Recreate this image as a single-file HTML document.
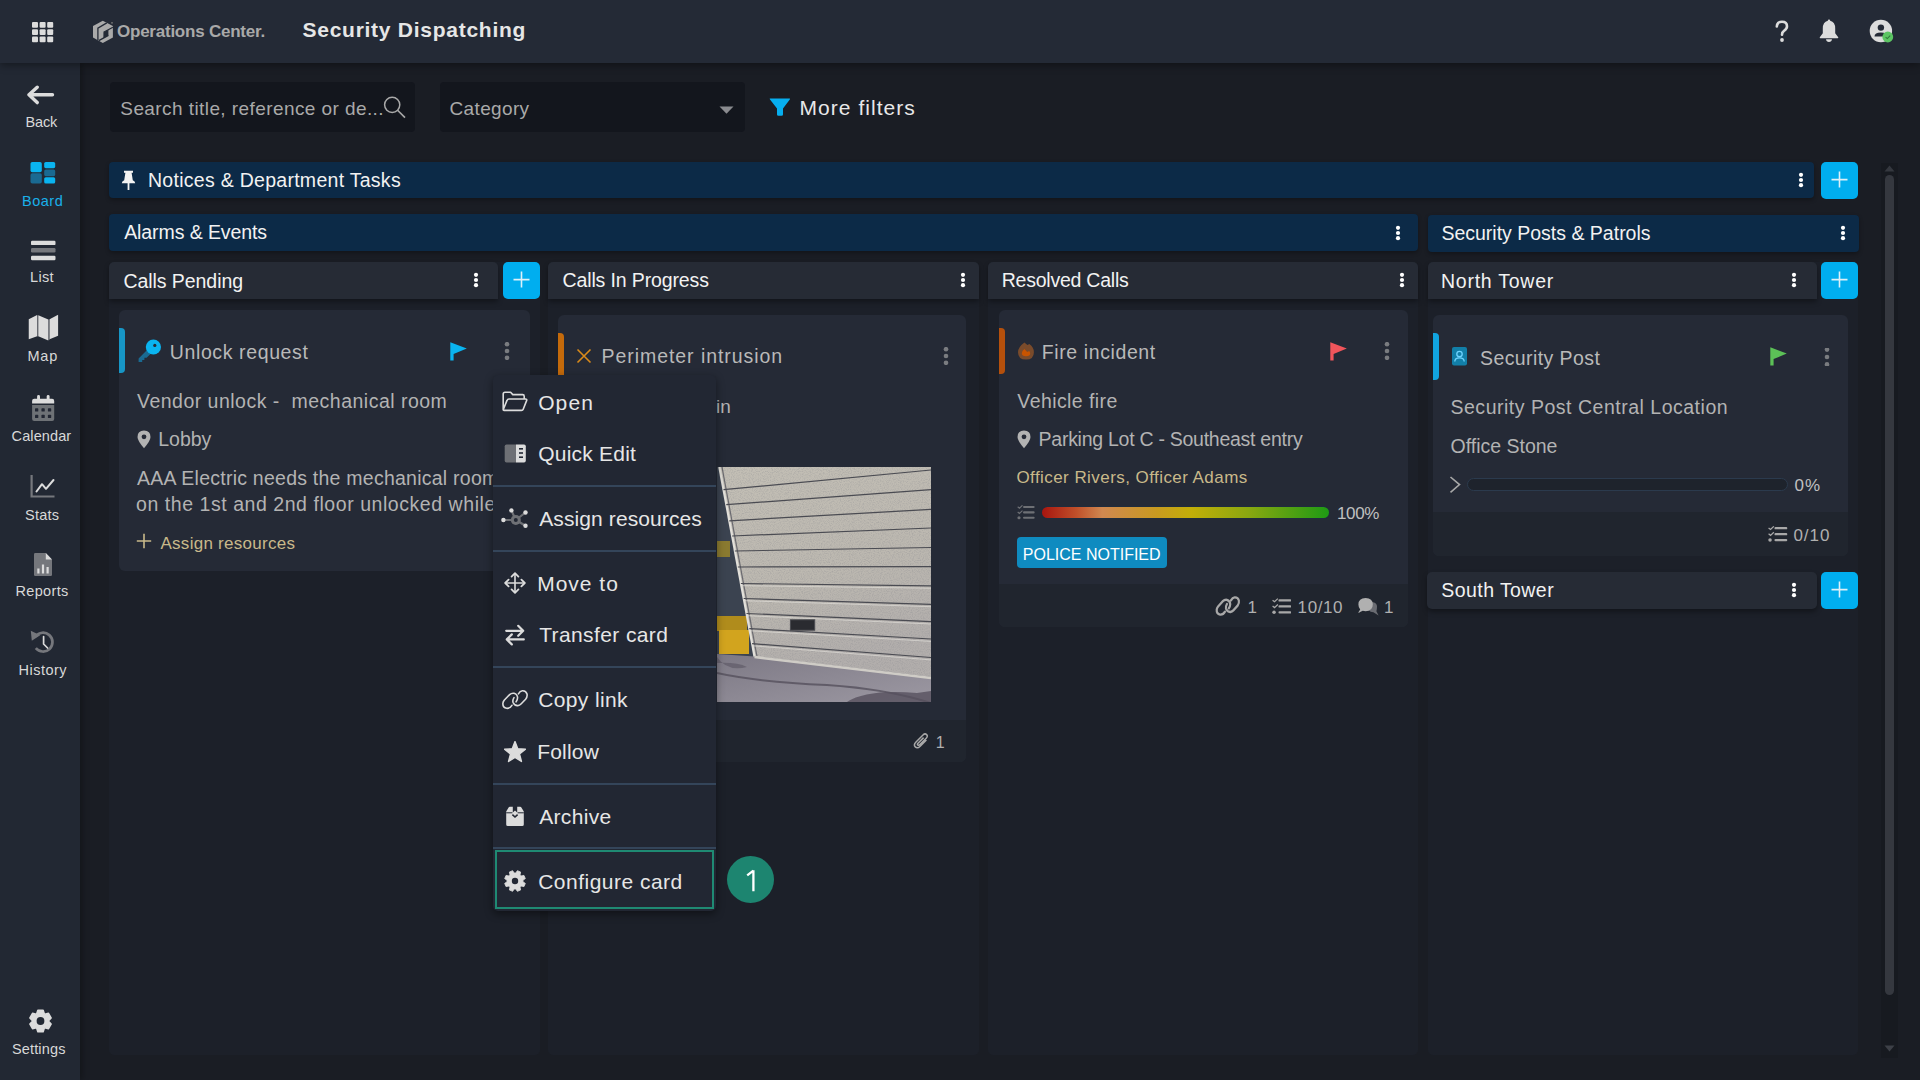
<!DOCTYPE html>
<html><head><meta charset="utf-8"><style>
html,body{margin:0;padding:0;width:1920px;height:1080px;overflow:hidden;background:#1a1d24;}
body{position:relative;font-family:"Liberation Sans",sans-serif;}
div,svg{position:absolute;box-sizing:border-box;}
.t{line-height:1;white-space:pre;}
</style></head><body>
<div style="left:0px;top:0px;width:1920px;height:63px;background:#242a36;border-radius:0px;box-shadow:0 2px 8px rgba(0,0,0,.4);z-index:2"></div>
<div style="left:0px;top:63px;width:80px;height:1017px;background:#222833;border-radius:0px;box-shadow:3px 0 6px rgba(0,0,0,.25);z-index:1"></div>
<div style="left:0;top:0;z-index:3"><svg style="position:absolute;left:32px;top:22px" width="22" height="21" viewBox="0 0 22 21"><rect x="0.0" y="0.0" width="6" height="5.8" rx="1" fill="#dcdcdc"/><rect x="0.0" y="7.2" width="6" height="5.8" rx="1" fill="#dcdcdc"/><rect x="0.0" y="14.4" width="6" height="5.8" rx="1" fill="#dcdcdc"/><rect x="7.6" y="0.0" width="6" height="5.8" rx="1" fill="#dcdcdc"/><rect x="7.6" y="7.2" width="6" height="5.8" rx="1" fill="#dcdcdc"/><rect x="7.6" y="14.4" width="6" height="5.8" rx="1" fill="#dcdcdc"/><rect x="15.2" y="0.0" width="6" height="5.8" rx="1" fill="#dcdcdc"/><rect x="15.2" y="7.2" width="6" height="5.8" rx="1" fill="#dcdcdc"/><rect x="15.2" y="14.4" width="6" height="5.8" rx="1" fill="#dcdcdc"/></svg></div>
<div style="left:0;top:0;z-index:3"><div class="t" style="left:117px;top:23.299999999999997px;font-size:17px;color:#a9a9a9;font-weight:700;letter-spacing:-0.235px;">Operations Center.</div><div class="t" style="left:302.5px;top:19px;font-size:21px;color:#e6e6e6;font-weight:700;letter-spacing:0.737px;">Security Dispatching</div></div>
<div style="left:110px;top:82px;width:305px;height:50px;background:#13161d;border-radius:4px;"></div>
<div class="t" style="left:120.3px;top:99px;font-size:19px;color:#a9a9a9;font-weight:400;letter-spacing:0.419px;">Search title, reference or de...</div>
<div style="left:440px;top:82px;width:305px;height:50px;background:#13161d;border-radius:4px;"></div>
<div class="t" style="left:449.5px;top:99px;font-size:19px;color:#a9a9a9;font-weight:400;letter-spacing:0.357px;">Category</div>
<svg style="position:absolute;left:719px;top:106px" width="15" height="8" viewBox="0 0 15 8"><path d="M0.5 0.5H14.5L7.5 7.8Z" fill="#8a8b8f"/></svg>
<svg style="position:absolute;left:769px;top:98px" width="22" height="18" viewBox="0 0 22 18"><path d="M1 0.5H20.5Q21.5 0.5 20.8 1.6L14 10.5V16.5Q14 17.8 12.6 17.8H9.4Q8 17.8 8 16.5V10.5L1 1.6Q0.3 0.5 1 0.5Z" fill="#06aeef"/></svg>
<div class="t" style="left:799.6px;top:97px;font-size:21px;color:#e8e8e8;font-weight:400;letter-spacing:1.036px;">More filters</div>
<div style="left:109px;top:162px;width:1705px;height:36px;background:#0c2a47;border-radius:4px;box-shadow:0 2px 4px rgba(0,0,0,.3)"></div>
<div class="t" style="left:148px;top:171px;font-size:19.5px;color:#f2f2f2;font-weight:400;letter-spacing:0.280px;">Notices &amp; Department Tasks</div>
<svg style="position:absolute;left:1797px;top:171px" width="8" height="18" viewBox="0 0 8 18"><circle cx="4" cy="3.8" r="2.1" fill="#ffffff"/><circle cx="4" cy="9" r="2.1" fill="#ffffff"/><circle cx="4" cy="14.2" r="2.1" fill="#ffffff"/></svg>
<div style="left:1821px;top:162px;width:37px;height:37px;background:#00aeef;border-radius:5px;"></div><svg style="position:absolute;left:1821px;top:162px" width="37" height="37" viewBox="0 0 37 37"><path d="M10.5 17.6H26.5M18.5 9.6V25.6" stroke="#dcf0f8" stroke-width="1.6"/></svg>
<div style="left:109px;top:214px;width:1309px;height:37px;background:#0c2a47;border-radius:4px;box-shadow:0 2px 4px rgba(0,0,0,.3)"></div>
<div class="t" style="left:124.2px;top:223.2px;font-size:19.5px;color:#f2f2f2;font-weight:400;letter-spacing:-0.086px;">Alarms &amp; Events</div>
<svg style="position:absolute;left:1394px;top:224px" width="8" height="18" viewBox="0 0 8 18"><circle cx="4" cy="3.8" r="2.1" fill="#ffffff"/><circle cx="4" cy="9" r="2.1" fill="#ffffff"/><circle cx="4" cy="14.2" r="2.1" fill="#ffffff"/></svg>
<div style="left:1428px;top:215px;width:431px;height:37px;background:#0c2a47;border-radius:4px;box-shadow:0 2px 4px rgba(0,0,0,.3)"></div>
<div class="t" style="left:1441.4px;top:224px;font-size:19.5px;color:#f2f2f2;font-weight:400;letter-spacing:0.000px;">Security Posts &amp; Patrols</div>
<svg style="position:absolute;left:1839px;top:224px" width="8" height="18" viewBox="0 0 8 18"><circle cx="4" cy="3.8" r="2.1" fill="#ffffff"/><circle cx="4" cy="9" r="2.1" fill="#ffffff"/><circle cx="4" cy="14.2" r="2.1" fill="#ffffff"/></svg>
<div style="left:109px;top:262px;width:431px;height:793px;background:#1c2029;border-radius:5px;"></div>
<div style="left:548px;top:262px;width:431px;height:793px;background:#1c2029;border-radius:5px;"></div>
<div style="left:988px;top:262px;width:430px;height:793px;background:#1c2029;border-radius:5px;"></div>
<div style="left:1428px;top:262px;width:430px;height:793px;background:#1c2029;border-radius:5px;"></div>
<div style="left:109px;top:262px;width:389px;height:37px;background:#262b35;border-radius:5px 5px 0 0;box-shadow:0 3px 5px rgba(0,0,0,.35)"></div>
<div class="t" style="left:123.5px;top:271.5px;font-size:19.5px;color:#f2f2f2;font-weight:400;letter-spacing:-0.067px;">Calls Pending</div>
<svg style="position:absolute;left:472px;top:271px" width="8" height="18" viewBox="0 0 8 18"><circle cx="4" cy="3.8" r="2.1" fill="#ffffff"/><circle cx="4" cy="9" r="2.1" fill="#ffffff"/><circle cx="4" cy="14.2" r="2.1" fill="#ffffff"/></svg>
<div style="left:503px;top:262px;width:37px;height:37px;background:#00aeef;border-radius:5px;"></div><svg style="position:absolute;left:503px;top:262px" width="37" height="37" viewBox="0 0 37 37"><path d="M10.5 17.6H26.5M18.5 9.6V25.6" stroke="#dcf0f8" stroke-width="1.6"/></svg>
<div style="left:548px;top:262px;width:431px;height:37px;background:#262b35;border-radius:5px 5px 0 0;box-shadow:0 3px 5px rgba(0,0,0,.35)"></div>
<div class="t" style="left:562.5px;top:271px;font-size:19.5px;color:#f2f2f2;font-weight:400;letter-spacing:-0.125px;">Calls In Progress</div>
<svg style="position:absolute;left:959px;top:271px" width="8" height="18" viewBox="0 0 8 18"><circle cx="4" cy="3.8" r="2.1" fill="#ffffff"/><circle cx="4" cy="9" r="2.1" fill="#ffffff"/><circle cx="4" cy="14.2" r="2.1" fill="#ffffff"/></svg>
<div style="left:988px;top:262px;width:430px;height:37px;background:#262b35;border-radius:5px 5px 0 0;box-shadow:0 3px 5px rgba(0,0,0,.35)"></div>
<div class="t" style="left:1001.7px;top:271px;font-size:19.5px;color:#f2f2f2;font-weight:400;letter-spacing:-0.231px;">Resolved Calls</div>
<svg style="position:absolute;left:1398px;top:271px" width="8" height="18" viewBox="0 0 8 18"><circle cx="4" cy="3.8" r="2.1" fill="#ffffff"/><circle cx="4" cy="9" r="2.1" fill="#ffffff"/><circle cx="4" cy="14.2" r="2.1" fill="#ffffff"/></svg>
<div style="left:1428px;top:262px;width:389px;height:37px;background:#262b35;border-radius:5px 5px 0 0;box-shadow:0 3px 5px rgba(0,0,0,.35)"></div>
<div class="t" style="left:1441px;top:271.5px;font-size:19.5px;color:#f2f2f2;font-weight:400;letter-spacing:0.750px;">North Tower</div>
<svg style="position:absolute;left:1790px;top:271px" width="8" height="18" viewBox="0 0 8 18"><circle cx="4" cy="3.8" r="2.1" fill="#ffffff"/><circle cx="4" cy="9" r="2.1" fill="#ffffff"/><circle cx="4" cy="14.2" r="2.1" fill="#ffffff"/></svg>
<div style="left:1821px;top:262px;width:37px;height:37px;background:#00aeef;border-radius:5px;"></div><svg style="position:absolute;left:1821px;top:262px" width="37" height="37" viewBox="0 0 37 37"><path d="M10.5 17.6H26.5M18.5 9.6V25.6" stroke="#dcf0f8" stroke-width="1.6"/></svg>
<div style="left:1881px;top:163px;width:17px;height:895px;background:#171a20;border-radius:0px;"></div>
<div style="left:1885px;top:175px;width:9px;height:820px;background:#35383f;border-radius:5px;"></div>
<svg style="position:absolute;left:1884px;top:165px" width="11" height="7" viewBox="0 0 11 7"><path d="M0.5 6.5L5.5 0.5L10.5 6.5Z" fill="#35383f"/></svg>
<svg style="position:absolute;left:1884px;top:1045px" width="11" height="7" viewBox="0 0 11 7"><path d="M0.5 0.5L5.5 6.5L10.5 0.5Z" fill="#3d4047"/></svg>
<div style="left:119px;top:310px;width:411px;height:261px;background:#252a36;border-radius:6px;"></div>
<div style="left:119px;top:328px;width:6px;height:45px;background:#1796c6;border-radius:0 4px 4px 0;"></div>
<div class="t" style="left:169.8px;top:342.6px;font-size:19.5px;color:#b9b9b9;font-weight:400;letter-spacing:0.615px;">Unlock request</div>
<svg style="position:absolute;left:503.4px;top:342px" width="8" height="18" viewBox="0 0 8 18"><circle cx="4" cy="2.2" r="2.3" fill="#7a7c80"/><circle cx="4" cy="9" r="2.3" fill="#7a7c80"/><circle cx="4" cy="15.8" r="2.3" fill="#7a7c80"/></svg>
<div class="t" style="left:137px;top:392px;font-size:19.5px;color:#b3b3b3;font-weight:400;letter-spacing:0.484px;">Vendor unlock -  mechanical room</div>
<div class="t" style="left:158.2px;top:430px;font-size:19.5px;color:#b3b3b3;font-weight:400;letter-spacing:0.000px;">Lobby</div>
<div class="t" style="left:137px;top:469px;font-size:19.5px;color:#b3b3b3;font-weight:400;letter-spacing:0.243px;">AAA Electric needs the mechanical room</div>
<div class="t" style="left:136px;top:495px;font-size:19.5px;color:#b3b3b3;font-weight:400;letter-spacing:0.553px;">on the 1st and 2nd floor unlocked while</div>
<div class="t" style="left:160.5px;top:535px;font-size:17px;color:#c9b98a;font-weight:400;letter-spacing:0.267px;">Assign resources</div>
<div style="left:558px;top:315px;width:408px;height:447px;background:#252a36;border-radius:6px;"></div>
<div style="left:558px;top:333px;width:6px;height:48px;background:#c46a0b;border-radius:0 4px 4px 0;"></div>
<div class="t" style="left:601.5px;top:347px;font-size:19.5px;color:#b9b9b9;font-weight:400;letter-spacing:0.944px;">Perimeter intrusion</div>
<svg style="position:absolute;left:942px;top:347px" width="8" height="18" viewBox="0 0 8 18"><circle cx="4" cy="2.2" r="2.3" fill="#7a7c80"/><circle cx="4" cy="9" r="2.3" fill="#7a7c80"/><circle cx="4" cy="15.8" r="2.3" fill="#7a7c80"/></svg>
<div class="t" style="left:498.5px;top:397px;font-size:19px;color:#b3b3b3;font-weight:400;letter-spacing:0.000px;">Fence breach, north gate in</div>
<div style="left:558px;top:720px;width:408px;height:42px;background:#20252e;border-radius:0 0 6px 6px;"></div>
<div class="t" style="left:935.8px;top:735px;font-size:16px;color:#b0b0b0;font-weight:400;letter-spacing:0.000px;">1</div>
<div style="left:999px;top:310px;width:409px;height:317px;background:#252a36;border-radius:6px;"></div>
<div style="left:999px;top:328px;width:6px;height:46px;background:#b5500c;border-radius:0 4px 4px 0;"></div>
<div class="t" style="left:1041.8px;top:342.5px;font-size:19.5px;color:#b9b9b9;font-weight:400;letter-spacing:0.600px;">Fire incident</div>
<svg style="position:absolute;left:1383px;top:342px" width="8" height="18" viewBox="0 0 8 18"><circle cx="4" cy="2.2" r="2.3" fill="#7a7c80"/><circle cx="4" cy="9" r="2.3" fill="#7a7c80"/><circle cx="4" cy="15.8" r="2.3" fill="#7a7c80"/></svg>
<div class="t" style="left:1017.3px;top:392px;font-size:19.5px;color:#b3b3b3;font-weight:400;letter-spacing:0.418px;">Vehicle fire</div>
<div class="t" style="left:1038.6px;top:430px;font-size:19.5px;color:#b3b3b3;font-weight:400;letter-spacing:-0.267px;">Parking Lot C - Southeast entry</div>
<div class="t" style="left:1016.4px;top:469.2px;font-size:17px;color:#c9b98a;font-weight:400;letter-spacing:0.439px;">Officer Rivers, Officer Adams</div>
<div class="t" style="left:1337px;top:505px;font-size:17px;color:#c0c0c0;font-weight:400;letter-spacing:-0.333px;">100%</div>
<div style="left:1017px;top:537px;width:150px;height:31px;background:#0f8bc0;border-radius:4px;"></div>
<div class="t" style="left:1022.8px;top:546.6px;font-size:16px;color:#ffffff;font-weight:400;letter-spacing:0.000px;">POLICE NOTIFIED</div>
<div style="left:999px;top:584px;width:409px;height:43px;background:#20252e;border-radius:0 0 6px 6px;"></div>
<div class="t" style="left:1247.4px;top:599.4px;font-size:17px;color:#b0b0b0;font-weight:400;letter-spacing:0.000px;">1</div>
<div class="t" style="left:1297.6px;top:599.4px;font-size:17px;color:#b0b0b0;font-weight:400;letter-spacing:0.600px;">10/10</div>
<div class="t" style="left:1384px;top:599.4px;font-size:17px;color:#b0b0b0;font-weight:400;letter-spacing:0.000px;">1</div>
<div style="left:1433px;top:315px;width:415px;height:241px;background:#252a36;border-radius:6px;"></div>
<div style="left:1433px;top:333px;width:6px;height:47px;background:#11a4e0;border-radius:0 4px 4px 0;"></div>
<div class="t" style="left:1480px;top:348.5px;font-size:19.5px;color:#b9b9b9;font-weight:400;letter-spacing:0.417px;">Security Post</div>
<svg style="position:absolute;left:1823.4px;top:348px" width="8" height="18" viewBox="0 0 8 18"><circle cx="4" cy="1.5999999999999996" r="2.3" fill="#7a7c80"/><circle cx="4" cy="9" r="2.3" fill="#7a7c80"/><circle cx="4" cy="16.4" r="2.3" fill="#7a7c80"/></svg>
<div class="t" style="left:1450.5px;top:398.3px;font-size:19.5px;color:#b3b3b3;font-weight:400;letter-spacing:0.510px;">Security Post Central Location</div>
<div class="t" style="left:1450.5px;top:437.3px;font-size:19.5px;color:#b3b3b3;font-weight:400;letter-spacing:0.000px;">Office Stone</div>
<div class="t" style="left:1794.6px;top:477.3px;font-size:17px;color:#c0c0c0;font-weight:400;letter-spacing:1.000px;">0%</div>
<div style="left:1433px;top:512px;width:415px;height:44px;background:#20252e;border-radius:0 0 6px 6px;"></div>
<div class="t" style="left:1793.4px;top:527.4px;font-size:17px;color:#b0b0b0;font-weight:400;letter-spacing:1.000px;">0/10</div>
<div style="left:1427px;top:572px;width:390px;height:37px;background:#262b35;border-radius:5px;box-shadow:0 3px 5px rgba(0,0,0,.35)"></div>
<div class="t" style="left:1441.3px;top:581.3px;font-size:19.5px;color:#f2f2f2;font-weight:400;letter-spacing:0.430px;">South Tower</div>
<svg style="position:absolute;left:1790px;top:581px" width="8" height="18" viewBox="0 0 8 18"><circle cx="4" cy="3.8" r="2.1" fill="#ffffff"/><circle cx="4" cy="9" r="2.1" fill="#ffffff"/><circle cx="4" cy="14.2" r="2.1" fill="#ffffff"/></svg>
<div style="left:1821px;top:572px;width:37px;height:37px;background:#00aeef;border-radius:5px;"></div><svg style="position:absolute;left:1821px;top:572px" width="37" height="37" viewBox="0 0 37 37"><path d="M10.5 17.6H26.5M18.5 9.6V25.6" stroke="#dcf0f8" stroke-width="1.6"/></svg>
<svg style="position:absolute;left:137px;top:339px" width="25" height="24" viewBox="0 0 25 24"><path d="M11.5 9.5L1.6 19.4V23H5.2V21H7.4V18.8H9.6L14.5 13.9Z" fill="#1a6a92"/><circle cx="16.4" cy="8" r="7.6" fill="#0ab4f0"/><circle cx="17.8" cy="6.4" r="1.6" fill="#252a36"/></svg>
<svg style="position:absolute;left:450px;top:342px" width="18" height="19" viewBox="0 0 18 19"><path d="M0.3 0.2L16.8 6.6L3.6 12V18.6H0.3Z" fill="#0ab4f0"/></svg>
<svg style="position:absolute;left:137px;top:430px" width="14" height="19" viewBox="0 0 14 19"><path d="M7 0.4Q13.5 0.4 13.5 6.9Q13.5 10.5 7 18.2Q0.5 10.5 0.5 6.9Q0.5 0.4 7 0.4Z" fill="#b3b3b3"/><circle cx="7" cy="6.8" r="2.4" fill="#252a36"/></svg>
<svg style="position:absolute;left:136px;top:533px" width="16" height="16" viewBox="0 0 16 16"><path d="M8 0.8V15.2M0.8 8H15.2" stroke="#c9b98a" stroke-width="1.6"/></svg>
<svg style="position:absolute;left:576px;top:348px" width="16" height="16" viewBox="0 0 16 16"><path d="M1.5 1.5L14.5 14.5M14.5 1.5L1.5 14.5" stroke="#d98a1a" stroke-width="1.6"/></svg>
<svg style="position:absolute;left:913px;top:732px" width="17" height="18" viewBox="0 0 17 18"><path d="M13.4 8L7.2 14.2Q4.4 17 2.3 14.9Q0.2 12.8 3 10L10 3Q12 1 13.6 2.6Q15.2 4.2 13.2 6.2L6.6 12.8Q5.6 13.8 4.8 13Q4 12.2 5 11.2L10.6 5.6" fill="none" stroke="#a8a8a8" stroke-width="1.5"/></svg>
<svg style="position:absolute;left:1017px;top:342px" width="18" height="18" viewBox="0 0 18 18"><path d="M7.4 0.4L10.4 2.9L12.4 2.1Q16.9 5.5 16.9 10.2Q16.9 17.6 9 17.6Q1 17.6 1 10.2Q1 5 7.4 0.4Z" fill="#7a4b2b"/><path d="M7.4 7L10.2 10.1L12.2 9Q13.2 10.2 13.2 11.6Q13.2 14.2 9 14.2Q4.8 14.2 4.8 11.2Q4.8 9 7.4 7Z" fill="#c85400"/></svg>
<svg style="position:absolute;left:1330px;top:342px" width="18" height="19" viewBox="0 0 18 19"><path d="M0.3 0.2L16.8 6.6L3.6 12V18.6H0.3Z" fill="#f0555b"/></svg>
<svg style="position:absolute;left:1017px;top:430px" width="14" height="19" viewBox="0 0 14 19"><path d="M7 0.4Q13.5 0.4 13.5 6.9Q13.5 10.5 7 18.2Q0.5 10.5 0.5 6.9Q0.5 0.4 7 0.4Z" fill="#b3b3b3"/><circle cx="7" cy="6.8" r="2.4" fill="#252a36"/></svg>
<svg style="position:absolute;left:1016.5px;top:505px" width="18" height="14.5" viewBox="0 0 20 16.4"><path d="M0.6 2L2.6 3.6L6 0.4M0.6 8L2.6 9.6L6 6.4" fill="none" stroke="#6e7075" stroke-width="1.3"/><circle cx="2.1" cy="14.4" r="1.8" fill="#6e7075"/><path d="M7.8 2.2H18.6M7.8 8.4H18.6M7.8 14.4H18.6" stroke="#6e7075" stroke-width="2.4" stroke-linecap="round"/></svg>
<div style="left:1042px;top:507px;width:287px;height:10.5px;background:linear-gradient(90deg,#a8150f 0%,#c0502a 12%,#d08850 21%,#c89a20 40%,#c2ae08 52%,#8aa810 72%,#1e9a14 100%);border-radius:6px;box-shadow:0 0 0 1px #1f2c3d"></div>
<svg style="position:absolute;left:1211px;top:590px" width="34" height="32" viewBox="0 0 34 32"><g transform="translate(1.2 0.6) scale(0.92 0.99)"><path d="M13.9 21.3Q12 24.6 8.6 24.3Q4.6 23.6 4.9 19.3Q5 17.6 6.4 16L11.6 10.6Q13.5 8.9 16 9.3Q19.5 10.3 19.6 13.8Q19.5 16 18.1 17.8M16 13.6Q14.4 16 15 18.2Q16.4 21.8 19.8 21.6Q21.6 21.4 23 20L27.6 15.2Q29.6 12.8 29 10Q28 6.6 24.4 6.8Q22 7 20.4 9.8" fill="none" stroke="#a8a8a8" stroke-width="2.4" stroke-linecap="round"/></g></svg>
<svg style="position:absolute;left:1271.5px;top:598px" width="19.5" height="16.5" viewBox="0 0 20 16.4"><path d="M0.6 2L2.6 3.6L6 0.4M0.6 8L2.6 9.6L6 6.4" fill="none" stroke="#a8a8a8" stroke-width="1.3"/><circle cx="2.1" cy="14.4" r="1.8" fill="#a8a8a8"/><path d="M7.8 2.2H18.6M7.8 8.4H18.6M7.8 14.4H18.6" stroke="#a8a8a8" stroke-width="2.4" stroke-linecap="round"/></svg>
<svg style="position:absolute;left:1356px;top:596px" width="26" height="22" viewBox="0 0 26 22"><path d="M21 10.6Q21 7 17 6.2Q13.8 6 12.4 8.6Q11 11.4 12.6 14Q14.2 16.2 17.4 16.2L22.6 19.4L20.4 15.2Q21 13.5 21 10.6Z" fill="#6a6c72"/><path d="M9.6 2Q16.8 2 16.8 8.6Q16.8 15.2 9.6 15.2Q8 15.2 6.8 14.8L2 17L4.2 13.4Q2.4 11.6 2.4 8.6Q2.4 2 9.6 2Z" fill="#b0b0b0"/></svg>
<svg style="position:absolute;left:1451px;top:346px" width="17" height="20" viewBox="0 0 17 20"><rect x="1" y="1" width="15" height="18.5" rx="2" fill="#127fa8"/><circle cx="8.5" cy="8" r="2.7" fill="none" stroke="#6fd4ff" stroke-width="1.3"/><path d="M3.8 15.6Q3.8 11.8 8.5 11.8Q13.2 11.8 13.2 15.6" fill="none" stroke="#6fd4ff" stroke-width="1.3"/></svg>
<svg style="position:absolute;left:1769.5px;top:347px" width="18" height="19" viewBox="0 0 18 19"><path d="M0.3 0.2L16.8 6.6L3.6 12V18.6H0.3Z" fill="#5cc057"/></svg>
<svg style="position:absolute;left:1449px;top:476px" width="13" height="18" viewBox="0 0 13 18"><path d="M1.5 1L10.5 8.6L1.5 16.4" fill="none" stroke="#a8a8a8" stroke-width="1.6"/></svg>
<div style="left:1467px;top:478px;width:321px;height:12.5px;background:#1e232c;border-radius:7px;border:1.5px solid #2b3a4d"></div>
<svg style="position:absolute;left:1768px;top:526px" width="19.5" height="16" viewBox="0 0 20 16.4"><path d="M0.6 2L2.6 3.6L6 0.4M0.6 8L2.6 9.6L6 6.4" fill="none" stroke="#a8a8a8" stroke-width="1.3"/><circle cx="2.1" cy="14.4" r="1.8" fill="#a8a8a8"/><path d="M7.8 2.2H18.6M7.8 8.4H18.6M7.8 14.4H18.6" stroke="#a8a8a8" stroke-width="2.4" stroke-linecap="round"/></svg>
<svg style="position:absolute;left:716.5px;top:467.4px" width="214" height="235" viewBox="0 0 214 235"><defs><linearGradient id="gd" x1="0" y1="0" x2="0.3" y2="1"><stop offset="0" stop-color="#c3bfb5"/><stop offset="0.6" stop-color="#bcb8b0"/><stop offset="1" stop-color="#b2aeac"/></linearGradient>
<filter id="nz" x="0" y="0" width="100%" height="100%"><feTurbulence type="fractalNoise" baseFrequency="0.9" numOctaves="2" seed="3"/><feColorMatrix values="0 0 0 0 0.25  0 0 0 0 0.25  0 0 0 0 0.27  0 0 0 -2.2 1.3"/><feComposite in2="SourceGraphic" operator="in"/></filter>
<linearGradient id="asph" x1="0" y1="0" x2="1" y2="1"><stop offset="0" stop-color="#7d7985"/><stop offset="1" stop-color="#9c98a2"/></linearGradient></defs>
<rect x="0" y="0" width="214" height="235" fill="#3b4350"/>
<rect x="0" y="74" width="13" height="16" fill="#8a7a30"/>
<rect x="0" y="149" width="30" height="15" fill="#b08c1c"/>
<rect x="2" y="163" width="30" height="24" fill="#d2a41e"/>
<path d="M0 187L37.5 189.5L214 210V235H0Z" fill="url(#asph)"/>
<path d="M0 206Q40 215 110 218Q170 222 214 236" stroke="#55505c" stroke-width="2" fill="none" opacity="0.8"/>
<path d="M130 235Q150 222 200 226L214 224V235Z" fill="#56505e" opacity="0.8"/>
<path d="M0 190Q10 205 30 200Q20 195 0 196Z" fill="#5a5562" opacity="0.6"/>
<path d="M2.3 0H214V210L37.5 189.5Z" fill="url(#gd)"/><path d="M2.3 0H214V210L37.5 189.5Z" fill="#777" filter="url(#nz)" opacity="0.35"/>
<path d="M2.3 0L37.5 189.5" stroke="#e2e0da" stroke-width="2.2"/>
<path d="M5 0L40 189.5" stroke="#6a6a70" stroke-width="1.2"/>
<path d="M37.5 190L214 211" stroke="#cfccc6" stroke-width="2.5"/>
<path d="M6.5 22.7L214 3" stroke="#4a4b52" stroke-width="1.2"/><path d="M9.3 37.7L214 22.7" stroke="#4a4b52" stroke-width="1.2"/><path d="M12.3 53.8L214 42.4" stroke="#4a4b52" stroke-width="1.2"/><path d="M15.1 69L214 61" stroke="#4a4b52" stroke-width="1.2"/><path d="M17.9 84L214 80.5" stroke="#4a4b52" stroke-width="1.2"/><path d="M20.9 100L214 99.6" stroke="#4a4b52" stroke-width="1.2"/><path d="M23.9 116.5L214 118.8" stroke="#4a4b52" stroke-width="1.2"/><path d="M24.9 118.7L214 121.2" stroke="#e4e2dc" stroke-width="0.9" opacity="0.7"/><path d="M26.7 131.5L214 137.3" stroke="#4a4b52" stroke-width="1.2"/><path d="M27.7 133.7L214 139.70000000000002" stroke="#e4e2dc" stroke-width="0.9" opacity="0.7"/><path d="M29.5 146.5L214 154.6" stroke="#4a4b52" stroke-width="1.2"/><path d="M30.5 148.7L214 157.0" stroke="#e4e2dc" stroke-width="0.9" opacity="0.7"/><path d="M32.3 161.6L214 172" stroke="#4a4b52" stroke-width="1.2"/><path d="M33.3 163.79999999999998L214 174.4" stroke="#e4e2dc" stroke-width="0.9" opacity="0.7"/><path d="M35.1 176.6L214 190.5" stroke="#4a4b52" stroke-width="1.2"/><path d="M36.1 178.79999999999998L214 192.9" stroke="#e4e2dc" stroke-width="0.9" opacity="0.7"/>
<rect x="73.4" y="152.8" width="24.3" height="10.4" fill="#2a2b30" stroke="#4a4b50" stroke-width="1"/></svg>
<div style="left:0;top:0;z-index:3"><svg style="position:absolute;left:26px;top:85px" width="29" height="20" viewBox="0 0 29 20"><path d="M3.2 9.8H26.5M11.2 2.2L3 9.8L11.2 17.6" fill="none" stroke="#dcdcdc" stroke-width="3.4" stroke-linecap="round" stroke-linejoin="round"/></svg><svg style="position:absolute;left:30px;top:162px" width="26" height="22" viewBox="0 0 26 22"><rect x="0.5" y="0" width="11.3" height="10.3" rx="1.8" fill="#0ab4f0"/><rect x="0.5" y="11.3" width="11.3" height="10.3" rx="1.8" fill="#1a6a92"/><rect x="14.2" y="0" width="11" height="6.2" rx="1.6" fill="#0ab4f0"/><rect x="14.2" y="7.4" width="11" height="6.8" rx="1.6" fill="#1a6a92"/><rect x="14.2" y="15.2" width="11" height="6.4" rx="1.6" fill="#0ab4f0"/></svg><svg style="position:absolute;left:30px;top:240px" width="26" height="21" viewBox="0 0 26 21"><rect x="1" y="0.7" width="24.5" height="4.4" rx="1.2" fill="#dcdcdc"/><rect x="1" y="8" width="24.5" height="4.4" rx="1.2" fill="#75777c"/><rect x="1" y="15.7" width="24.5" height="4.5" rx="1.2" fill="#dcdcdc"/></svg><svg style="position:absolute;left:28px;top:314px" width="31" height="27" viewBox="0 0 31 27"><path d="M9 1.2H10.4V22.4H9Z M20.2 5.6H21.7V26H20.2Z" fill="#5a5d64"/><path d="M0.75 5.2L9.1 1V22.2L0.75 25.2Z M10.3 1.2L20.3 5.6V26.4L10.3 22.2Z M21.6 5.2L30.1 0.8V21.8L21.6 25.2Z" fill="#dcdcdc"/></svg><svg style="position:absolute;left:31px;top:394px" width="24" height="28" viewBox="0 0 24 28"><path d="M1.1 11H23.2V25Q23.2 27 21.2 27H3.1Q1.1 27 1.1 25Z" fill="#6e7276"/><path d="M1.1 9.5V6.9Q1.1 4.75 3.2 4.75H21.1Q23.2 4.75 23.2 6.9V9.5Z" fill="#dcdcdc"/><rect x="6.1" y="1" width="2.9" height="5" rx="1.4" fill="#dcdcdc"/><rect x="15.7" y="1" width="2.9" height="5" rx="1.4" fill="#dcdcdc"/><rect x="4.00" y="14.3" width="3.3" height="3.3" rx="0.7" fill="#222733"/><rect x="4.00" y="20.8" width="3.3" height="3.3" rx="0.7" fill="#222733"/><rect x="10.45" y="14.3" width="3.3" height="3.3" rx="0.7" fill="#222733"/><rect x="10.45" y="20.8" width="3.3" height="3.3" rx="0.7" fill="#222733"/><rect x="16.90" y="14.3" width="3.3" height="3.3" rx="0.7" fill="#222733"/><rect x="16.90" y="20.8" width="3.3" height="3.3" rx="0.7" fill="#222733"/></svg><svg style="position:absolute;left:30px;top:474px" width="25" height="24" viewBox="0 0 25 24"><path d="M1.6 1V22.5H24.5" fill="none" stroke="#75777c" stroke-width="2.2"/><path d="M6.5 17.5L12 10.2L16 14.8L23.5 6" fill="none" stroke="#dcdcdc" stroke-width="2" stroke-linejoin="round" stroke-linecap="round"/></svg><svg style="position:absolute;left:34px;top:553px" width="19" height="24" viewBox="0 0 19 24"><path d="M0 1.2Q0 0 1.2 0H11.8L18 6.4V21.8Q18 23 16.8 23H1.2Q0 23 0 21.8Z" fill="#75777c"/><path d="M11.8 0L18 6.4H11.8Z" fill="#dcdcdc"/><rect x="3.3" y="15.5" width="2.2" height="5" fill="#dcdcdc"/><rect x="7.9" y="11.5" width="2.2" height="9" fill="#dcdcdc"/><rect x="12.5" y="14" width="2.2" height="6.5" fill="#dcdcdc"/></svg><svg style="position:absolute;left:30px;top:629px" width="26" height="26" viewBox="0 0 26 26"><path d="M5.6 7.4A9.4 9.4 0 1 1 5.8 19.1" fill="none" stroke="#75777c" stroke-width="2.7"/><path d="M0.8 1.8L10.2 6.2L1.8 11.8Z" fill="#75777c"/><path d="M13.6 7.6V15L17.6 19" fill="none" stroke="#dcdcdc" stroke-width="1.7" stroke-linecap="round"/></svg></div>
<div style="left:0;top:0;z-index:3"><svg style="position:absolute;left:28px;top:1008px" width="25" height="26" viewBox="0 0 25 26"><path d="M8.66 5.98 L9.89 2.32 L15.11 2.32 L16.34 5.98 L16.66 6.17 L20.45 5.39 L23.06 9.92 L20.50 12.81 L20.50 13.19 L23.06 16.08 L20.45 20.61 L16.66 19.83 L16.34 20.02 L15.11 23.68 L9.89 23.68 L8.66 20.02 L8.34 19.83 L4.55 20.61 L1.94 16.08 L4.50 13.19 L4.50 12.81 L1.94 9.92 L4.55 5.39 L8.34 6.17Z" fill="#dcdcdc" stroke="#dcdcdc" stroke-width="1.6" stroke-linejoin="round"/><circle cx="12.5" cy="13" r="3.9" fill="#222833"/></svg></div>
<div style="left:0;top:0;z-index:3"><svg style="position:absolute;left:88px;top:16px" width="30" height="32" viewBox="0 0 30 32"><path d="M14.8 4.7L24.9 10.1V21.4L14.8 27L5 21.4V10.1Z" fill="#aaaaaa"/><path d="M18.8 6.9L9.9 12.2V24M24.9 11.2L15.6 16.2M20.4 19.4L10.8 24.6" fill="none" stroke="#242a36" stroke-width="1.3"/><path d="M15.4 16.4L20.4 13.8V19.4L15.4 22Z" fill="#242a36"/><circle cx="24" cy="6.8" r="0.9" fill="#777"/></svg><svg style="position:absolute;left:1774px;top:20px" width="16" height="23" viewBox="0 0 16 23"><path d="M2.8 6.5Q2.8 1.8 8 1.8Q13 1.8 13 6.3Q13 9 10 10.8Q8 12 8 14.8" fill="none" stroke="#dcdcdc" stroke-width="2.6" stroke-linecap="round"/><circle cx="8" cy="20" r="1.9" fill="#dcdcdc"/></svg><svg style="position:absolute;left:1819px;top:19px" width="20" height="24" viewBox="0 0 20 24"><path d="M10 0.5Q11.2 0.5 11.2 1.8Q16.2 3 16.2 9.5V14.2L19.2 18.2Q19.6 19.2 18.6 19.2H1.4Q0.4 19.2 0.8 18.2L3.8 14.2V9.5Q3.8 3 8.8 1.8Q8.8 0.5 10 0.5Z M7 20.3H13Q12.6 23 10 23Q7.4 23 7 20.3Z" fill="#dcdcdc"/></svg><svg style="position:absolute;left:1868px;top:19px" width="28" height="28" viewBox="0 0 28 28"><circle cx="12.9" cy="12" r="11.2" fill="#dcdcdc"/><circle cx="12.9" cy="8.6" r="3.2" fill="#242a36"/><path d="M6.5 17.6Q6.5 13.6 12.9 13.6Q19.3 13.6 19.3 17.6Z" fill="#242a36"/><circle cx="19.8" cy="18" r="5.4" fill="#5cc563"/><path d="M17.6 18.2L19.3 19.6L22.2 16.7" fill="none" stroke="#2f7a3a" stroke-width="1.1"/></svg></div>
<svg style="position:absolute;left:383px;top:96px" width="24" height="23" viewBox="0 0 24 23"><circle cx="9.2" cy="8.8" r="7.6" fill="none" stroke="#a9a9a9" stroke-width="1.5"/><path d="M14.6 14.2L22 21.6" stroke="#a9a9a9" stroke-width="1.6"/></svg>
<svg style="position:absolute;left:120px;top:170px" width="17" height="21" viewBox="0 0 17 21"><path d="M4 0.8H13V2.8H11.6L12.8 10.2Q15.2 11.2 15.2 13.3H1.8Q1.8 11.2 4.2 10.2L5.4 2.8H4Z" fill="#f2f2f2"/><rect x="7.6" y="13" width="1.8" height="7" fill="#f2f2f2"/></svg>
<div style="left:0;top:0;z-index:5"><div style="left:493px;top:375px;width:223px;height:536px;background:#222733;border-radius:5px;box-shadow:0 3px 8px rgba(0,0,0,.45)"></div><div style="left:493px;top:485px;width:223px;height:2px;background:#34455a;border-radius:0px;"></div><div style="left:493px;top:550px;width:223px;height:2px;background:#34455a;border-radius:0px;"></div><div style="left:493px;top:666px;width:223px;height:2px;background:#34455a;border-radius:0px;"></div><div style="left:493px;top:783px;width:223px;height:2px;background:#34455a;border-radius:0px;"></div><div style="left:493px;top:847px;width:223px;height:2px;background:#34455a;border-radius:0px;"></div><div class="t" style="left:538.2px;top:391.6px;font-size:21px;color:#e6e6e6;font-weight:400;letter-spacing:1.100px;">Open</div><div class="t" style="left:538.2px;top:443.1px;font-size:21px;color:#e6e6e6;font-weight:400;letter-spacing:0.222px;">Quick Edit</div><div class="t" style="left:539.2px;top:507.70000000000005px;font-size:21px;color:#e6e6e6;font-weight:400;letter-spacing:0.107px;">Assign resources</div><div class="t" style="left:537.2px;top:572.8px;font-size:21px;color:#e6e6e6;font-weight:400;letter-spacing:1.000px;">Move to</div><div class="t" style="left:539.2px;top:624.4px;font-size:21px;color:#e6e6e6;font-weight:400;letter-spacing:0.383px;">Transfer card</div><div class="t" style="left:538.2px;top:688.6px;font-size:21px;color:#e6e6e6;font-weight:400;letter-spacing:0.375px;">Copy link</div><div class="t" style="left:537.2px;top:741px;font-size:21px;color:#e6e6e6;font-weight:400;letter-spacing:0.200px;">Follow</div><div class="t" style="left:539.2px;top:806.1px;font-size:21px;color:#e6e6e6;font-weight:400;letter-spacing:0.333px;">Archive</div><div class="t" style="left:538.2px;top:870.7px;font-size:21px;color:#e6e6e6;font-weight:400;letter-spacing:0.485px;">Configure card</div><svg style="position:absolute;left:502px;top:391px" width="26" height="21" viewBox="0 0 26 21"><path d="M1.2 18.8V3Q1.2 1.2 3 1.2H8.6L10.8 3.6H20.6Q22.2 3.6 22.2 5.2V7.8M1.2 18.8L5 9.4Q5.5 8 7 8H23.4Q25.2 8 24.6 9.6L21.2 18.2Q20.8 19.4 19.4 19.4H2Q1.2 19.4 1.2 18.8Z" fill="none" stroke="#dcdcdc" stroke-width="1.6" stroke-linejoin="round"/></svg><svg style="position:absolute;left:504px;top:444px" width="23" height="19" viewBox="0 0 23 19"><path d="M2.5 0.5H12V18.5H2.5Q0.7 18.5 0.7 16.7V2.3Q0.7 0.5 2.5 0.5Z" fill="#6e7075"/><path d="M12 0.5H20Q21.8 0.5 21.8 2.3V16.7Q21.8 18.5 20 18.5H12Z" fill="#dcdcdc"/><rect x="15" y="4" width="4" height="1.6" fill="#222733"/><rect x="15" y="8.2" width="4" height="1.6" fill="#222733"/><rect x="15" y="12.4" width="4" height="1.6" fill="#222733"/></svg><svg style="position:absolute;left:501px;top:508px" width="28" height="22" viewBox="0 0 28 22"><path d="M2.4 12H14.8M10.4 2.4L14.8 12M24.5 4.5L14.8 12M24.5 17.8L14.8 12" stroke="#6e7075" stroke-width="2.2"/><circle cx="14.8" cy="12" r="5" fill="#6e7075"/><circle cx="14.8" cy="12" r="2" fill="#222733"/><circle cx="2.4" cy="12" r="2.2" fill="#dcdcdc"/><circle cx="10.4" cy="2.4" r="2.2" fill="#dcdcdc"/><circle cx="24.5" cy="4.5" r="2.2" fill="#dcdcdc"/><circle cx="24.5" cy="17.8" r="2.2" fill="#dcdcdc"/></svg><svg style="position:absolute;left:504px;top:572px" width="22" height="22" viewBox="0 0 22 22"><path d="M11 1.2V20.8M1.2 11H20.8" stroke="#dcdcdc" stroke-width="1.6"/><path d="M7.6 4.6L11 1.2L14.4 4.6M7.6 17.4L11 20.8L14.4 17.4M4.6 7.6L1.2 11L4.6 14.4M17.4 7.6L20.8 11L17.4 14.4" fill="none" stroke="#dcdcdc" stroke-width="1.8" stroke-linecap="round" stroke-linejoin="round"/></svg><svg style="position:absolute;left:505px;top:624px" width="20" height="22" viewBox="0 0 20 22"><path d="M1.2 6.8H18M13.2 1.8L18.2 6.8L13.2 11.8M18.8 15.4H2M6.8 10.4L1.8 15.4L6.8 20.4" fill="none" stroke="#dcdcdc" stroke-width="2.2" stroke-linecap="round" stroke-linejoin="round"/></svg><svg style="position:absolute;left:498px;top:684px" width="34" height="32" viewBox="0 0 34 32"><path d="M13.9 21.3Q12 24.6 8.6 24.3Q4.6 23.6 4.9 19.3Q5 17.6 6.4 16L11.6 10.6Q13.5 8.9 16 9.3Q19.5 10.3 19.6 13.8Q19.5 16 18.1 17.8M16 13.6Q14.4 16 15 18.2Q16.4 21.8 19.8 21.6Q21.6 21.4 23 20L27.6 15.2Q29.6 12.8 29 10Q28 6.6 24.4 6.8Q22 7 20.4 9.8" fill="none" stroke="#dcdcdc" stroke-width="1.6" stroke-linecap="round"/></svg><svg style="position:absolute;left:504px;top:740.5px" width="22" height="22" viewBox="0 0 22 22"><path d="M11.00 0.60 L13.76 7.80 L21.46 8.20 L15.47 13.05 L17.47 20.50 L11.00 16.30 L4.53 20.50 L6.53 13.05 L0.54 8.20 L8.24 7.80Z" fill="#dcdcdc" stroke="#dcdcdc" stroke-width="1.4" stroke-linejoin="round"/></svg><svg style="position:absolute;left:505px;top:806px" width="20" height="21" viewBox="0 0 20 21"><path d="M1.2 5.5L3.6 1.4Q4 0.8 4.8 0.8H7.8V6.5L10 4.5L12.2 6.5V0.8H15.2Q16 0.8 16.4 1.4L18.8 5.5V18.4Q18.8 20 17.2 20H2.8Q1.2 20 1.2 18.4Z" fill="#dcdcdc"/><path d="M7.4 8.6L10 11L12.6 8.6" fill="none" stroke="#222733" stroke-width="1.6"/><path d="M1.2 6.8H7.4M12.6 6.8H18.8" stroke="#222733" stroke-width="1"/></svg><svg style="position:absolute;left:504px;top:870px" width="22" height="22" viewBox="0 0 22 22"><path d="M18.97 11.74 L21.33 13.39 L19.99 16.61 L17.16 16.11 L16.11 17.16 L16.61 19.99 L13.39 21.33 L11.74 18.97 L10.26 18.97 L8.61 21.33 L5.39 19.99 L5.89 17.16 L4.84 16.11 L2.01 16.61 L0.67 13.39 L3.03 11.74 L3.03 10.26 L0.67 8.61 L2.01 5.39 L4.84 5.89 L5.89 4.84 L5.39 2.01 L8.61 0.67 L10.26 3.03 L11.74 3.03 L13.39 0.67 L16.61 2.01 L16.11 4.84 L17.16 5.89 L19.99 5.39 L21.33 8.61 L18.97 10.26Z" fill="#dcdcdc" stroke="#dcdcdc" stroke-width="0.8" stroke-linejoin="round"/><circle cx="11" cy="11" r="3.2" fill="#222733"/></svg><div style="left:495px;top:850px;width:219px;height:59px;background:transparent;border-radius:0px;border:2px solid #1f8a73"></div><div style="left:727px;top:856px;width:47px;height:47px;background:#1d8570;border-radius:50%;"></div><svg style="position:absolute;left:727px;top:856px" width="47" height="47" viewBox="0 0 47 47"><path d="M26.4 14.2V35.2M26.4 14.6L20.2 19.4" fill="none" stroke="#ffffff" stroke-width="2.3" stroke-linejoin="round"/></svg></div>
<div style="left:0;top:0;z-index:3"><div class="t" style="left:25.5px;top:115px;font-size:14.5px;color:#d8d8d8;font-weight:400;letter-spacing:-0.167px;">Back</div><div class="t" style="left:22px;top:194px;font-size:14.5px;color:#1ab0ea;font-weight:400;letter-spacing:0.500px;">Board</div><div class="t" style="left:30px;top:270px;font-size:14.5px;color:#d8d8d8;font-weight:400;letter-spacing:0.333px;">List</div><div class="t" style="left:27.5px;top:349px;font-size:14.5px;color:#d8d8d8;font-weight:400;letter-spacing:0.750px;">Map</div><div class="t" style="left:11.6px;top:429px;font-size:14.5px;color:#d8d8d8;font-weight:400;letter-spacing:0.100px;">Calendar</div><div class="t" style="left:25px;top:508px;font-size:14.5px;color:#d8d8d8;font-weight:400;letter-spacing:0.250px;">Stats</div><div class="t" style="left:15.5px;top:584px;font-size:14.5px;color:#d8d8d8;font-weight:400;letter-spacing:0.333px;">Reports</div><div class="t" style="left:18.5px;top:663px;font-size:14.5px;color:#d8d8d8;font-weight:400;letter-spacing:0.500px;">History</div><div class="t" style="left:12px;top:1042px;font-size:14.5px;color:#d8d8d8;font-weight:400;letter-spacing:0.143px;">Settings</div></div>
</body></html>
